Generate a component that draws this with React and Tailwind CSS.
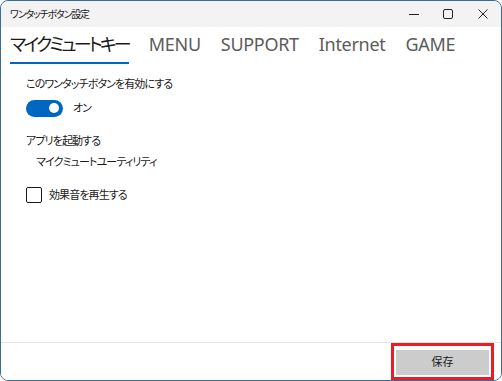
import React, { useState } from "react"

const font = { fontFamily: '"Noto Sans", "Noto Sans CJK JP", sans-serif' }

function TitleBar() {
  return (
    <div className="flex items-center h-[26px] shrink-0 bg-[#f3f3f3] rounded-t-lg">
      <span className="ml-[9px] text-[10px] tracking-[-1.2px] text-[#1a1a1a] whitespace-nowrap">ワンタッチボタン設定</span>
      <div className="ml-auto flex items-center h-full">
        <div className="w-[34px] h-full flex items-center justify-center">
          <svg width="10" height="10" viewBox="0 0 10 10"><path d="M0 5.5h10" stroke="#222" strokeWidth="1" /></svg>
        </div>
        <div className="w-[34px] h-full flex items-center justify-center">
          <svg width="10" height="10" viewBox="0 0 10 10"><rect x="0.5" y="0.5" width="9" height="9" rx="1.5" fill="none" stroke="#222" strokeWidth="1" /></svg>
        </div>
        <div className="w-[36px] h-full flex items-center justify-center">
          <svg width="10" height="10" viewBox="0 0 10 10"><path d="M0.5 0.5l9 9M9.5 0.5l-9 9" stroke="#222" strokeWidth="1" /></svg>
        </div>
      </div>
    </div>
  )
}

export default function App() {
  const [tab, setTab] = useState(0)
  const [on, setOn] = useState(true)
  const [sound, setSound] = useState(false)
  const tabs = ["マイクミュートキー", "MENU", "SUPPORT", "Internet", "GAME"]

  return (
    <div className="w-[502px] h-[381px] bg-white [font-feature-settings:'palt']" style={font}>
      <div className="w-full h-full border border-[#3b6d99] rounded-lg flex flex-col overflow-hidden">
        <TitleBar />

        {/* tabs */}
        <div className="flex items-end gap-[20px] pl-[9px] h-[37px] shrink-0">
          {tabs.map((t, i) => (
            <button
              key={t}
              onClick={() => setTab(i)}
              className={
                "text-[18px] leading-[24px] pb-[6px] border-b-2 whitespace-nowrap shrink-0 " +
                (i === 0 ? "tracking-[-2.8px] " : "tracking-[-0.3px] ") +
                (tab === i ? "text-[#1a1a1a] border-[#0067c0]" : "text-[#5c5c5c] border-transparent")
              }
            >
              {t}
            </button>
          ))}
        </div>

        <div className="flex-1 flex flex-col pl-[25px] pt-[12px] text-[11px] tracking-[-0.9px] text-[#1a1a1a]">
          <div className="leading-[16px]">このワンタッチボタンを有効にする</div>
          <div className="flex items-center mt-[7px] h-[18px]">
            <button
              onClick={() => setOn(!on)}
              className={"w-[37px] h-[17px] rounded-full flex items-center px-[4px] " + (on ? "bg-[#0067c0] justify-end" : "bg-white border border-[#666] justify-start")}
            >
              <span className={"w-[10px] h-[10px] rounded-full " + (on ? "bg-white" : "bg-[#666]")} />
            </button>
            <span className="ml-[10px]">{on ? "オン" : "オフ"}</span>
          </div>
          <div className="mt-[16px] leading-[16px]">アプリを起動する</div>
          <div className="mt-[5px] ml-[10px] leading-[16px]">マイクミュートユーティリティ</div>
          <label className="flex items-center mt-[17px]">
            <button
              onClick={() => setSound(!sound)}
              className="w-[16px] h-[16px] border border-[#1a1a1a] rounded-[2px] bg-white"
            />
            <span className="ml-[7px]">効果音を再生する</span>
          </label>
        </div>

        <div className="h-[38px] shrink-0 border-t border-[#e5e5e5] flex items-center justify-end pr-[7px] bg-white">
          <div className="border-[3px] border-[#ed1c24] p-[2px]">
            <button className="w-[93px] h-[25px] bg-[#cccccc] text-[11px] text-[#1a1a1a]">保存</button>
          </div>
        </div>
      </div>
    </div>
  )
}
